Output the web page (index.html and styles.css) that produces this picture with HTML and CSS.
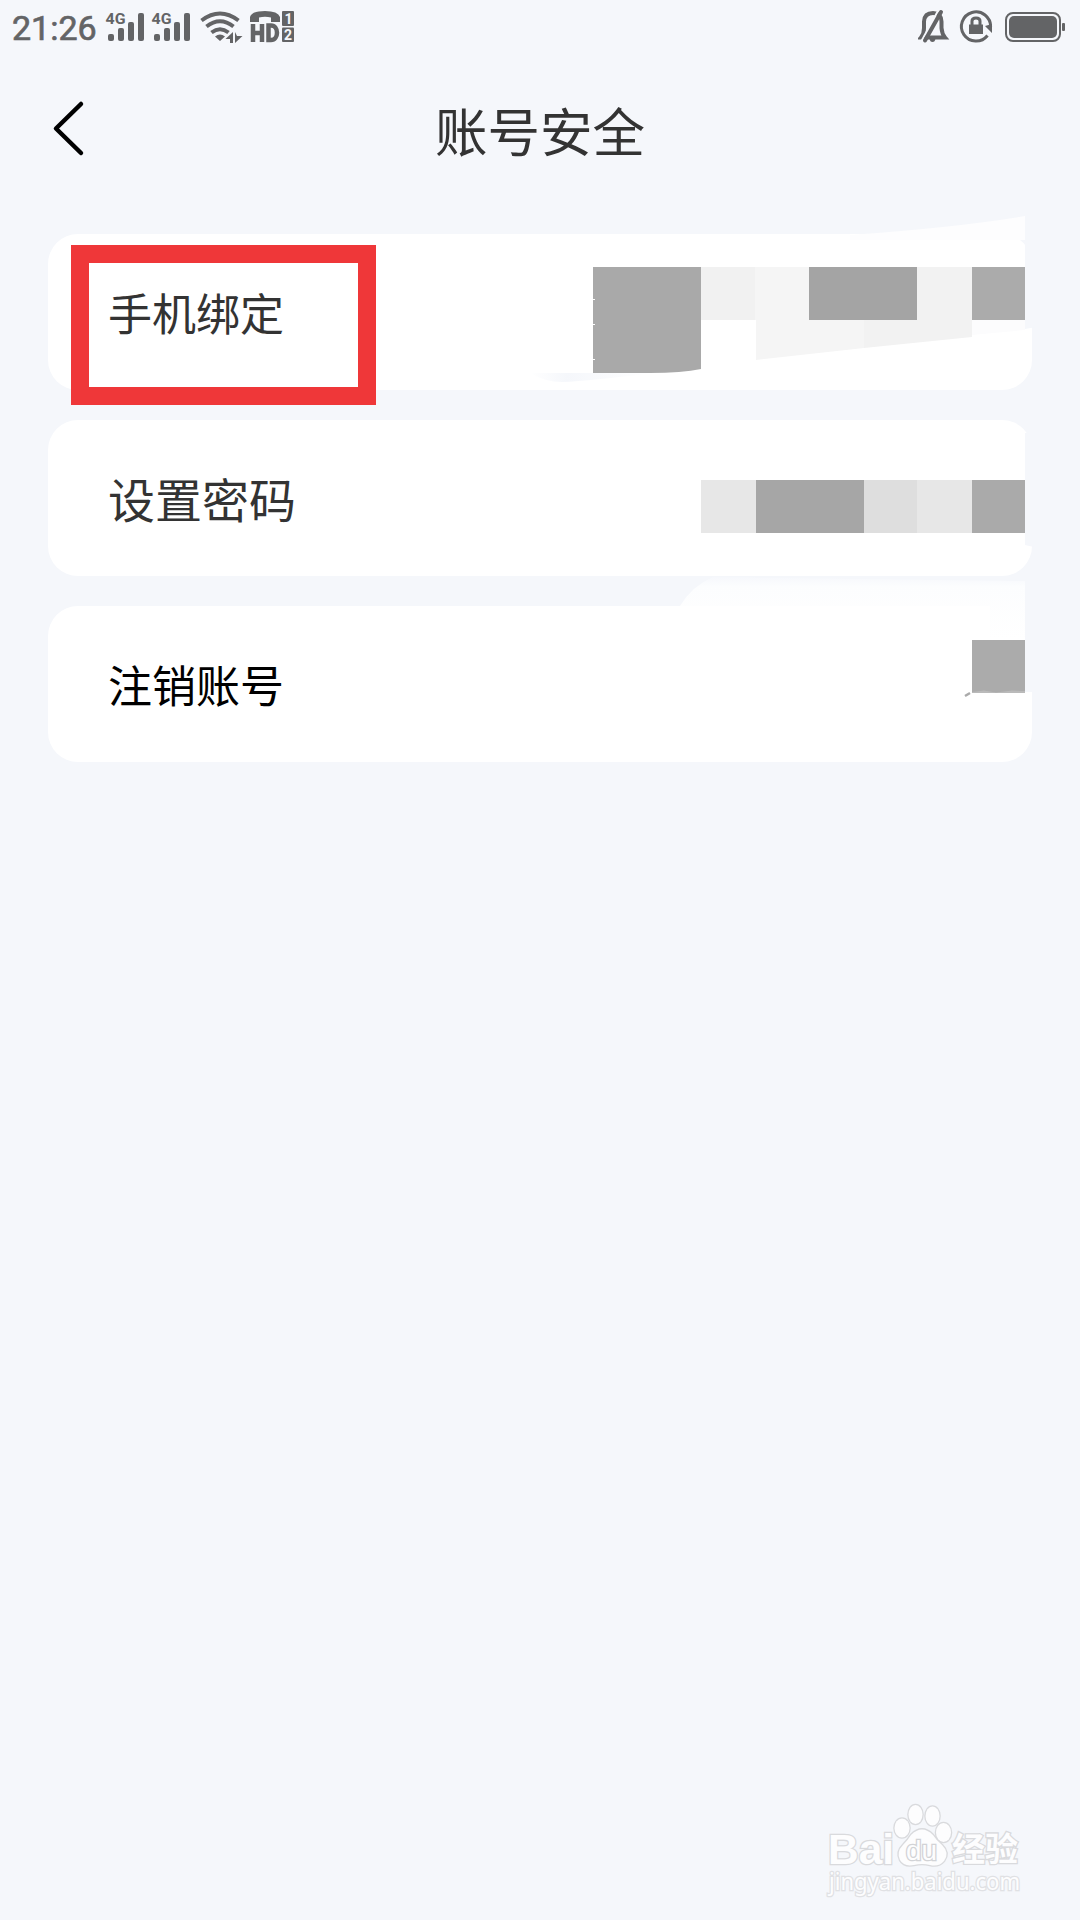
FILE: index.html
```html
<!DOCTYPE html>
<html lang="zh-CN">
<head>
<meta charset="utf-8">
<title>账号安全</title>
<link rel="stylesheet" href="styles.css">
</head>
<body>
<div class="status">
  <span class="time">21:26</span>
  <svg class="status-icons" width="200" height="54" viewBox="100 0 200 54">
    <g id="signal" class="ink">
      <text x="105.5" y="24" class="net" textLength="20" lengthAdjust="spacingAndGlyphs">4G</text>
      <rect x="108" y="34" width="6" height="7" rx="2"/>
      <rect x="118" y="28" width="6" height="13" rx="2"/>
      <rect x="128" y="22" width="6" height="19" rx="2"/>
      <rect x="138" y="13" width="6" height="28" rx="2"/>
    </g>
    <use href="#signal" x="46"/>
    <g class="wifi">
      <path d="M201.500 20.500Q220 6.500 238.500 20.500"/>
      <path d="M206.500 26.500Q220 16 233.500 26.500"/>
      <path d="M211.500 32.500Q220 26 228.500 32.500"/>
    </g>
    <path class="ink" d="M215 36.500Q220 32.500 225 36.500L220 41ZM233 32V43H230V39H225.500ZM235 32V43L242.500 36H237Z"/>
    <path class="ink" d="M250 22V17Q252 11 265 11Q278 11 280 17V22H271V17.500Q265 16 259 17.500V22Z"/>
    <path class="hd" d="M253 24V42M262 24V42M253 33H262M268.500 25.500V40H271C279 40 279 25.500 271 25.500Z"/>
    <rect class="ink" x="282" y="11" width="12" height="15" rx="1"/>
    <rect class="ink" x="282" y="27.500" width="12" height="14.500" rx="1"/>
    <text x="284.500" y="23.500" class="sim">1</text>
    <text x="284" y="40" class="sim">2</text>
  </svg>
  <svg class="status-right" width="152" height="54" viewBox="918 0 152 54">
    <path class="bell" d="M921 37.500Q924 34 924 28V21.500Q924.500 13 933 13Q941 13 941.500 21.500V28Q942 34 945 37.500Z"/>
    <path class="gap" d="M921.500 41L938.500 10"/>
    <path class="slash" d="M925 40.500L941 12"/>
    <path class="ink" d="M929.500 38.500H935.500Q935 42 932.500 42Q930 42 929.500 38.500Z"/>
    <path class="ring" d="M987.500 35.500A14.600 14.600 0 1 1 990.600 27"/>
    <path class="ink" d="M985 26L992 33V24ZM969 24.500H983V34H969Z"/>
    <path class="shackle" d="M972 25V21Q972 18 976 18Q980 18 980 21V25"/>
    <rect class="case" x="1006" y="13" width="54" height="28" rx="7"/>
    <rect class="ink" x="1009" y="16" width="48" height="22" rx="5"/>
    <rect class="ink" x="1062" y="23" width="3" height="8" rx="1"/>
  </svg>
</div>

<header class="header">
  <svg class="back" width="60" height="60" viewBox="0 0 60 60"><path d="M33 7L8 31.500L33 56"/></svg>
  <h1>账号安全</h1>
</header>

<main class="list">
  <div class="row row-bind">
    <span>手机绑定</span>
    <i class="marker"></i>
    <svg class="cover" width="540" height="190" viewBox="520 210 540 190">
      <defs>
        <linearGradient id="tail" x1="0" y1="0" x2="1" y2="0"><stop offset="0" stop-color="#fff"/><stop offset=".3" stop-color="#f5f7fb"/><stop offset="1" stop-color="#fff"/></linearGradient>
      </defs>
      <path class="bg" d="M1025 230H1036V327L1025 329Z"/>
      <path class="white" d="M850 235Q960 227 1025 216V240H850Z"/>
      <path fill="url(#tail)" d="M530 373H653Q590 381 562 382Q545 382 530 373Z"/>
      <path fill="#a9a9a9" d="M593 267H701V369Q682 373 650 373H593Z"/>
      <path fill="#f1f1f1" d="M701 267H755V320H701Z"/>
      <path fill="#f5f5f5" d="M755 267H809V320H864V348L756 360V320H755Z"/>
      <path fill="#a4a4a4" d="M809 267H917V320H809Z"/>
      <path fill="#f2f2f2" d="M917 267H972V337L864 348V320H917Z"/>
      <path fill="#ababab" d="M972 267H1025V320H972Z"/>
      <path fill="#fcfcfd" d="M972 320H1025V330L972 335Z"/>
      <path class="ticks" d="M593 299.500H595M593 324.500H595M593 359.500H595"/>
    </svg>
  </div>
  <div class="row row-password">
    <span>设置密码</span>
    <svg class="cover" width="380" height="156" viewBox="660 420 380 156">
      <path class="bg" d="M1025 433H1034V547L1025 545Z"/>
      <path fill="#e7e7e7" d="M701 480H756V533H701Z"/>
      <path fill="#a6a6a6" d="M756 480H864V533H756Z"/>
      <path fill="#dedede" d="M864 480H917V533H864Z"/>
      <path fill="#e7e7e7" d="M917 480H972V533H917Z"/>
      <path fill="#aaa" d="M972 480H1025V533H972Z"/>
    </svg>
  </div>
  <div class="row row-cancel">
    <span>注销账号</span>
    <svg class="cover" width="400" height="190" viewBox="660 572 400 190">
      <defs>
        <linearGradient id="haze" x1="0" y1="0" x2="0" y2="1"><stop offset="0" stop-color="#f6f8fc"/><stop offset=".15" stop-color="#fcfdfe"/><stop offset="1" stop-color="#fff"/></linearGradient>
      </defs>
      <path class="bg" d="M1025 600H1036V692H1025Z"/>
      <path fill="url(#haze)" d="M680 606Q692 586 713 577L1025 581V640H990V606Z"/>
      <path fill="#ababab" d="M972 640H1025V693H972Z"/>
      <path fill="#c4c4c4" d="M972 692L984 690.500L996 692.500L1012 690.500L1025 691V693H972Z" opacity=".6"/>
      <path class="speck" d="M965 696L970 693"/>
    </svg>
  </div>
</main>

<svg class="watermark" width="230" height="120" viewBox="810 1790 230 120">
  <g class="wm">
    <text x="828" y="1864" class="wm-bai" textLength="66" lengthAdjust="spacingAndGlyphs">Bai</text>
    <ellipse cx="902" cy="1828" rx="7.500" ry="9.500"/>
    <ellipse cx="915.500" cy="1814.500" rx="7" ry="9.500"/>
    <ellipse cx="932.500" cy="1816" rx="7" ry="9.500"/>
    <ellipse cx="943.500" cy="1832.500" rx="7.500" ry="9.500"/>
    <path d="M911 1835Q922 1824 933 1835Q936 1840 942 1845Q950 1853 944 1861Q939 1867 930 1865Q922 1863 914 1865Q904 1867 900 1860Q896 1852 903 1845Q908 1840 911 1835Z"/>
    <text x="906" y="1859.500" class="wm-du" textLength="31" lengthAdjust="spacingAndGlyphs">du</text>
    <text x="952" y="1861" class="wm-cn" textLength="66" lengthAdjust="spacingAndGlyphs">经验</text>
    <text x="829" y="1890" class="wm-url" textLength="191" lengthAdjust="spacingAndGlyphs">jingyan.baidu.com</text>
  </g>
</svg>
</body>
</html>
```
FILE: styles.css
```css
* { box-sizing: border-box; }
body {
  margin: 0;
  height: 1920px;
  overflow: hidden;
  display: flex;
  flex-direction: column;
  background: #f5f7fb;
  color: #333;
  font-family: "Noto Sans CJK SC", sans-serif;
}
svg { display: block; flex: none; }
.status { height: 54px; display: flex; padding: 0 10px 0 12px; }
.time {
  width: 88px;
  font: 400 34px/56px Roboto, sans-serif;
  color: #636466;
  -webkit-text-stroke: .7px #636466;
  white-space: nowrap;
}
.status-right { margin-left: auto; }
.ink { fill: #636466; }
.net { font: 700 15px Roboto, sans-serif; }
.sim { font: 700 14px Roboto, sans-serif; fill: #f5f7fb; }
.wifi, .hd, .slash, .ring, .shackle, .case, .bell { fill: none; stroke: #636466; }
.wifi { stroke-width: 4; }
.hd { stroke-width: 4.5; }
.bell { stroke-width: 4; }
.slash { stroke-width: 4; stroke-linecap: round; }
.gap { stroke: #f5f7fb; stroke-width: 2; }
.ring, .shackle { stroke-width: 3; }
.case { stroke-width: 2; }

.header {
  height: 180px;
  display: grid;
  grid-template-columns: 130px 1fr 130px;
  padding-top: 39px;
}
.back { margin: 4px 0 0 48px; }
.back path { fill: none; stroke: #000; stroke-width: 4.5; stroke-linecap: round; stroke-linejoin: round; }
h1 {
  margin: 0;
  font-size: 52.5px;
  font-weight: 400;
  line-height: 72px;
  text-align: center;
}

.list { display: flex; flex-direction: column; gap: 30px; padding: 0 48px; }
.row {
  position: relative;
  height: 156px;
  display: flex;
  align-items: center;
  padding-left: 60px;
  background: #fff;
  border-radius: 30px;
  font-size: 44px;
  line-height: 64px;
}
.row-password { font-size: 47px; }
.row-cancel { color: #000; }
.marker {
  position: absolute;
  left: 23px;
  top: 11px;
  width: 305px;
  height: 160px;
  border: 18px solid #ef3739;
}
.cover { position: absolute; }
.row-bind .cover { left: 472px; top: -24px; }
.row-password .cover { left: 612px; top: 0; }
.row-cancel .cover { left: 612px; top: -34px; }
.bg { fill: #f5f7fb; }
.white { fill: #fdfdfe; }
.ticks { stroke: #fff; }
.speck { stroke: #aaa; stroke-width: 2.5; }

.watermark { margin: auto 40px 10px auto; }
.wm { fill: #fdfdfe; stroke: #d9dadd; stroke-width: 2.6; paint-order: stroke; }
.wm-bai { font: 700 43px "Liberation Sans", sans-serif; }
.wm-du { font: 400 27px "Liberation Sans", sans-serif; stroke: #d2d3d6; }
.wm-cn { font: 700 33px "Noto Sans CJK SC", sans-serif; }
.wm-url { font: 400 23px "Noto Sans", sans-serif; stroke: #e0e1e4; }
```
